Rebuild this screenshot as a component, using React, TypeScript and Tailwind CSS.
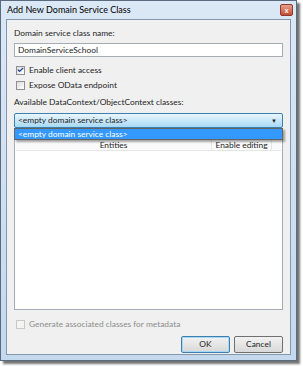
import { Check } from "lucide-react";

const font = { fontFamily: '"Segoe UI", Lato, "Noto Sans", sans-serif' };

function Box({ checked, disabled }: { checked?: boolean; disabled?: boolean }) {
  return (
    <span
      className={
        "flex h-[9px] w-[9px] items-center justify-center border " +
        (disabled ? "border-[#c8c8c8] bg-[#f4f4f4]" : "border-[#8e8f8f] bg-gradient-to-br from-[#dcdcdc] to-white")
      }
    >
      {checked && <Check className="h-[8px] w-[8px] text-[#1c3f95]" strokeWidth={4} />}
    </span>
  );
}

export default function App() {
  return (
    <div className="h-[366px] w-[303px] bg-white text-[8.4px] text-[#1e1e1e]" style={font}>
      {/* window with drop shadow */}
      <div className="h-[361px] w-[297px] border border-[#5b6b7f] bg-gradient-to-b from-[#dbe8f6] to-[#c4d8ee] shadow-[3px_3px_2px_rgba(0,0,0,0.55)]">
        <div className="flex h-[18px] items-center justify-between pl-[6px] pr-[3px]">
          <span className="text-[9px] text-black">Add New Domain Service Class</span>
          <span className="flex h-[12px] w-[13px] items-center justify-center rounded-[2px] border border-[#8a3a2e] bg-gradient-to-b from-[#e9a08e] to-[#c74a31] text-[7px] font-bold leading-none text-white">
            x
          </span>
        </div>
        <div className="mx-[5px] flex h-[336px] flex-col border border-[#8596ad] bg-[#f0f0f0] px-[7px] pt-[6px]">
          <div className="h-[14px] leading-[14px]">Domain service class name:</div>
          <div className="mt-[3px] flex h-[14px] items-center border border-[#a5acb5] bg-white px-[3px]">
            DomainServiceSchool
          </div>
          <label className="mt-[6px] flex h-[14px] items-center gap-[4px] pl-[2px]">
            <Box checked />
            <span>Enable client access</span>
          </label>
          <label className="mt-[1px] flex h-[14px] items-center gap-[4px] pl-[2px]">
            <Box />
            <span>Expose OData endpoint</span>
          </label>
          <div className="mt-[3px] h-[14px] leading-[14px]">Available DataContext/ObjectContext classes:</div>
          <div className="relative mt-[4px]">
            <div className="flex h-[15px] items-center justify-between rounded-[2px] border border-[#3c7fb1] bg-gradient-to-b from-[#eaf6fd] to-[#a7d9f5] px-[3px]">
              <span>&lt;empty domain service class&gt;</span>
              <span className="mr-[2px] text-[6px] leading-none">▼</span>
            </div>
            <div className="flex h-[182px] flex-col border border-t-0 border-[#a5acb5] bg-white px-[1px] pt-[12px]">
              <div className="flex h-[11px] border-b border-[#e5e5e5] bg-[#fafafa]">
                <div className="flex-1 border-r border-[#e5e5e5] text-center leading-[11px]">Entities</div>
                <div className="w-[60px] whitespace-nowrap border-r border-[#e5e5e5] text-center leading-[11px]">Enable editing</div>
                <div className="w-[9px]" />
              </div>
            </div>
            <div className="absolute left-0 right-0 top-[15px] h-[12px] border border-[#646464] bg-[#3399ff] px-[3px] leading-[10px] text-white shadow-[2px_2px_2px_rgba(0,0,0,0.35)]">
              &lt;empty domain service class&gt;
            </div>
          </div>
          <label className="mt-[8px] flex h-[13px] items-center gap-[4px] pl-[2px] text-[#8d8d8d]">
            <Box disabled />
            <span>Generate associated classes for metadata</span>
          </label>
          <div className="mt-[5px] flex justify-end gap-[4px]">
            <button className="h-[17px] w-[49px] rounded-[2px] border border-[#3c7fb1] bg-gradient-to-b from-[#f2f2f2] to-[#d8d8d8] shadow-[inset_0_0_0_1px_#a7d9f5]">
              OK
            </button>
            <button className="h-[17px] w-[49px] rounded-[2px] border border-[#707070] bg-gradient-to-b from-[#f2f2f2] to-[#d8d8d8]">
              Cancel
            </button>
          </div>
        </div>
      </div>
    </div>
  );
}
